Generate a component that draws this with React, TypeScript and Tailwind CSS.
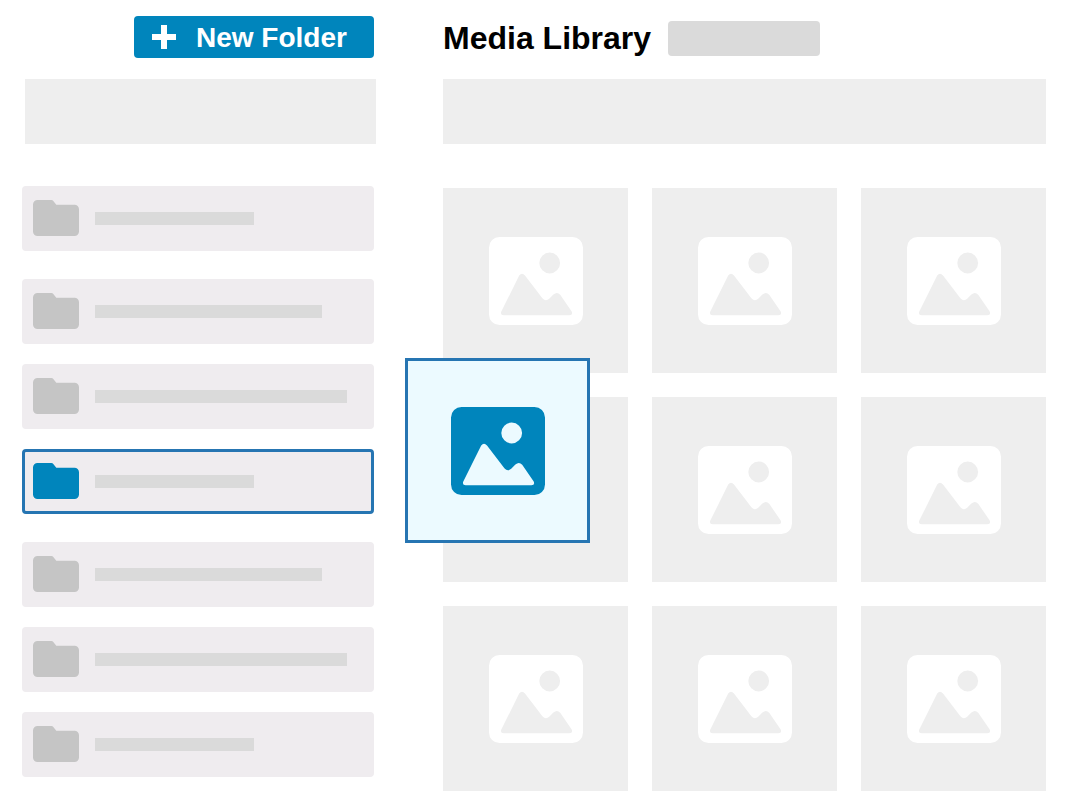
import React from "react";
import clsx from "clsx";

type Folder = { id: number; bar: string; selected?: boolean };

const folderGroups: Folder[][] = [
  [{ id: 1, bar: "w-[159px]" }],
  [
    { id: 2, bar: "w-[227px]" },
    { id: 3, bar: "w-[252px]" },
    { id: 4, bar: "w-[159px]", selected: true },
  ],
  [
    { id: 5, bar: "w-[227px]" },
    { id: 6, bar: "w-[252px]" },
    { id: 7, bar: "w-[159px]" },
  ],
];

const tiles = [1, 2, 3, 4, 5, 6, 7, 8, 9];
const draggedTile = 4;

function PlusIcon() {
  return (
    <svg className="size-6 shrink-0" viewBox="0 0 24 24" fill="currentColor" aria-hidden="true">
      <path d="M9 0h6v9h9v6h-9v9H9v-9H0V9h9z" />
    </svg>
  );
}

function FolderIcon({ className }: { className: string }) {
  return (
    <svg className={clsx("h-[37px] w-[46px] shrink-0", className)} viewBox="0 0 46 37" fill="currentColor" aria-hidden="true">
      <path d="M4.5 0H18.4Q19.6 0 20.5 1.2L23.3 4.8H41.5A4.5 4.5 0 0 1 46 9.3V31.5A4.5 4.5 0 0 1 41.5 36H4.5A4.5 4.5 0 0 1 0 31.5V4.5A4.5 4.5 0 0 1 4.5 0Z" />
    </svg>
  );
}

function ImageIcon({ className }: { className: string }) {
  return (
    <svg className={clsx("h-[88px] w-[94px]", className)} viewBox="0 0 94 88" fill="currentColor" aria-hidden="true">
      <path
        fillRule="evenodd"
        d="M10.5 0H83.5A10.5 10.5 0 0 1 94 10.5V77.5A10.5 10.5 0 0 1 83.5 88H10.5A10.5 10.5 0 0 1 0 77.5V10.5A10.5 10.5 0 0 1 10.5 0ZM50.3 26a10.4 10.4 0 1 0 20.8 0a10.4 10.4 0 1 0 -20.8 0ZM12.3 74.6L30.2 38.6Q32.8 34.9 36 38.4L53.4 61.2Q56.6 65 60.2 61.8L64.4 57.6Q68 54.3 71.2 57.8L82.7 74.4Q84.2 78.2 80.5 78.2H14.6Q11 78 12.3 74.6Z"
      />
    </svg>
  );
}

function FolderRow({ folder }: { folder: Folder }) {
  return (
    <li>
      <button
        type="button"
        aria-label={`Folder ${folder.id}`}
        aria-pressed={!!folder.selected}
        className={clsx(
          "flex h-[65px] w-full items-center gap-4 rounded border-3 bg-[#efecef] px-2",
          folder.selected ? "border-[#2675b2]" : "border-[#efecef]",
        )}
      >
        <FolderIcon className={folder.selected ? "text-[#0085bc]" : "text-[#c5c5c5]"} />
        <span className={clsx("h-[13px] bg-[#dadada]", folder.bar)} />
      </button>
    </li>
  );
}

export default function App() {
  return (
    <div className="flex min-h-screen gap-[67px] bg-white pt-4 pr-[19px] pb-5 pl-[22px] font-['Liberation_Sans',Arial,sans-serif]">
      <aside className="w-[354px] shrink-0">
        <div className="flex justify-end pr-0.5">
          <button
            type="button"
            className="flex h-[42px] w-60 items-center gap-5 rounded bg-[#0085bc] px-[18px] text-[28px] leading-[41px] font-bold whitespace-nowrap text-white"
          >
            <PlusIcon />
            New Folder
          </button>
        </div>
        <div className="mt-[21px] ml-[3px] h-[65px] bg-[#eeeeee]" />
        <nav aria-label="Folders" className="mt-[42px] flex flex-col gap-7 pr-0.5">
          {folderGroups.map((group) => (
            <ul key={group[0].id} className="flex flex-col gap-5">
              {group.map((folder) => (
                <FolderRow key={folder.id} folder={folder} />
              ))}
            </ul>
          ))}
        </nav>
      </aside>

      <main className="min-w-0 flex-1">
        <header className="flex h-11 items-center gap-[17px]">
          <h1 className="text-[32px] leading-[48px] font-bold whitespace-nowrap text-black">Media Library</h1>
          <div className="h-[35px] w-[152px] rounded bg-[#dadada]" />
        </header>
        <div className="mt-[19px] h-[65px] bg-[#eeeeee]" />
        <ul className="mt-11 grid grid-cols-3 gap-6">
          {tiles.map((tile) => (
            <li key={tile} className="relative flex aspect-square items-center justify-center bg-[#eeeeee]">
              {tile === draggedTile ? (
                <div className="absolute -top-[39px] -left-[38px] flex size-full items-center justify-center border-3 border-[#2675b2] bg-[#ecfaff]">
                  <ImageIcon className="text-[#0085bc]" />
                </div>
              ) : (
                <ImageIcon className="text-white" />
              )}
            </li>
          ))}
        </ul>
      </main>
    </div>
  );
}
